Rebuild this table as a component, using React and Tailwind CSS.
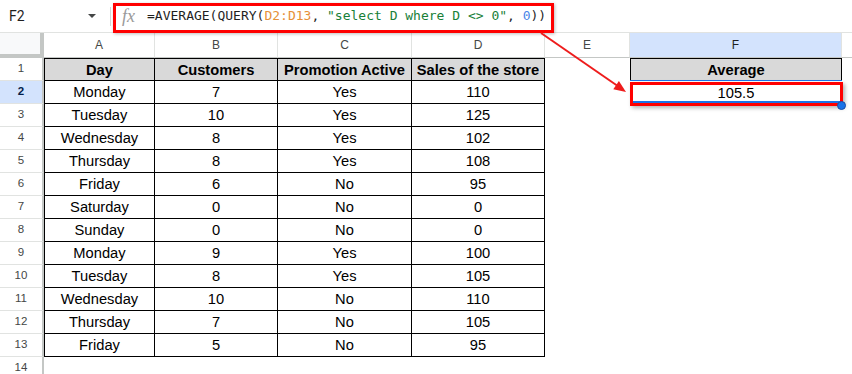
const cols = ["A", "B", "C", "D", "E", "F"];

const header = ["Day", "Customers", "Promotion Active", "Sales of the store"];

const rows = [
    ["Monday", "7", "Yes", "110"],
    ["Tuesday", "10", "Yes", "125"],
    ["Wednesday", "8", "Yes", "102"],
    ["Thursday", "8", "Yes", "108"],
    ["Friday", "6", "No", "95"],
    ["Saturday", "0", "No", "0"],
    ["Sunday", "0", "No", "0"],
    ["Monday", "9", "Yes", "100"],
    ["Tuesday", "8", "Yes", "105"],
    ["Wednesday", "10", "No", "110"],
    ["Thursday", "7", "No", "105"],
    ["Friday", "5", "No", "95"],
];

const gridCols = "grid grid-cols-[44px_111px_123px_134px_133px_85px_212px_1fr]";

function RowHead({ n, active }) {
    return (
        <div
            className={`h-[23px] flex items-center justify-center border-b border-b-[#e1e3e1] border-r-2 border-r-[#c4c7c5] text-[11.5px] ${
                active ? "bg-[#d3e3fd] font-bold text-[#041e49]" : "text-[#444746]"
            }`}
        >
            {n}
        </div>
    );
}

function Cell({ children, first, top, bold, gray }) {
    return (
        <div
            className={`h-[23px] flex items-center justify-center pt-px border-r border-b border-black text-[14.7px] text-black ${
                first ? "border-l" : ""
            } ${top ? "border-t" : ""} ${bold ? "font-bold" : ""} ${gray ? "bg-[#d9d9d9]" : ""}`}
        >
            {children}
        </div>
    );
}

export default function App() {
    return (
        <div className="relative w-[852px] h-[374px] overflow-hidden bg-white font-['Liberation_Sans',Arial,sans-serif]">
            {/* Formula bar */}
            <div className="flex items-center h-[33px] border-b border-[#e1e3e1]">
                <div className="w-[110px] flex items-center justify-between pl-[9px] pr-[14px]">
                    <span className="text-[14px] text-[#1f1f1f] font-['Roboto',sans-serif]">F2</span>
                    <span className="w-0 h-0 border-l-[4px] border-r-[4px] border-t-[4px] border-l-transparent border-r-transparent border-t-[#444746]" />
                </div>
                <div className="w-px h-[19px] bg-[#d5d5d5]" />
                <span className="ml-[11px] italic text-[18px] leading-none text-[#9a9a9a] font-['Liberation_Serif',serif]">fx</span>
                <div className="ml-[12px] text-[13px] whitespace-pre font-['DejaVu_Sans_Mono',monospace] text-[#1f1f1f]">
                    =AVERAGE(QUERY(<span className="text-[#e69138]">D2:D13</span>,{" "}
                    <span className="text-[#188038]">"select D where D {"<>"} 0"</span>,{" "}
                    <span className="text-[#4a86e8]">0</span>))
                </div>
            </div>

            {/* Column headers */}
            <div className={gridCols}>
                <div className="h-[25px] bg-[#f8f9fa] border-r-4 border-b-4 border-[#c4c7c5]" />
                {cols.map((c) => (
                    <div
                        key={c}
                        className={`h-[25px] flex items-center justify-center border-r border-r-[#e1e3e1] border-b border-b-[#c4c7c5] text-[12px] ${
                            c === "F" ? "bg-[#d3e3fd] text-[#1f1f1f]" : "text-[#444746]"
                        }`}
                    >
                        {c}
                    </div>
                ))}
                <div className="h-[25px] border-b border-b-[#c4c7c5]" />
            </div>

            {/* Rows */}
            <div className={gridCols}>
                <RowHead n={1} />
                {header.map((h, i) => (
                    <Cell key={h} first={i === 0} top bold gray>
                        {h}
                    </Cell>
                ))}
                <div />
                <Cell first top bold gray>
                    Average
                </Cell>
                <div />

                {rows.map((r, ri) => [
                    <RowHead key={`h${ri}`} n={ri + 2} active={ri === 0} />,
                    ...r.map((v, ci) => (
                        <Cell key={`${ri}-${ci}`} first={ci === 0}>
                            {v}
                        </Cell>
                    )),
                    <div key={`e${ri}`} />,
                    <div key={`f${ri}`} className="h-[23px] flex items-center justify-center pt-px text-[14.7px] text-black">
                        {ri === 0 ? "105.5" : ""}
                    </div>,
                    <div key={`g${ri}`} />,
                ])}
                <RowHead n={14} />
            </div>

            {/* Annotation: formula box */}
            <div className="absolute left-[113px] top-[3px] w-[441px] h-[30px] border-[3px] border-[#f00] shadow-[1px_1px_3px_rgba(0,0,0,0.25)] pointer-events-none" />

            {/* Selection on F2 */}
            <div className="absolute left-[630px] top-[80px] w-[212px] h-px bg-[#1a73e8]" />
            <div className="absolute left-[630px] top-[82px] w-[213px] h-[24px] border-[3px] border-[#f00] shadow-[2px_2px_4px_rgba(0,0,0,0.3)] pointer-events-none" />
            <div className="absolute left-[633px] top-[101px] w-[207px] h-[2px] bg-[#1a73e8]" />
            <div className="absolute left-[837px] top-[101px] w-[9px] h-[9px] rounded-full bg-[#1a73e8] border border-[#174ea6]" />

            {/* Arrow */}
            <svg className="absolute left-0 top-0 pointer-events-none" width="852" height="374">
                <line x1="541" y1="33" x2="617" y2="85.5" stroke="#ee1c1c" strokeWidth="2" />
                <polygon points="626,92 613.3,89.3 618.9,81.1" fill="#ee1c1c" />
            </svg>
        </div>
    );
}
